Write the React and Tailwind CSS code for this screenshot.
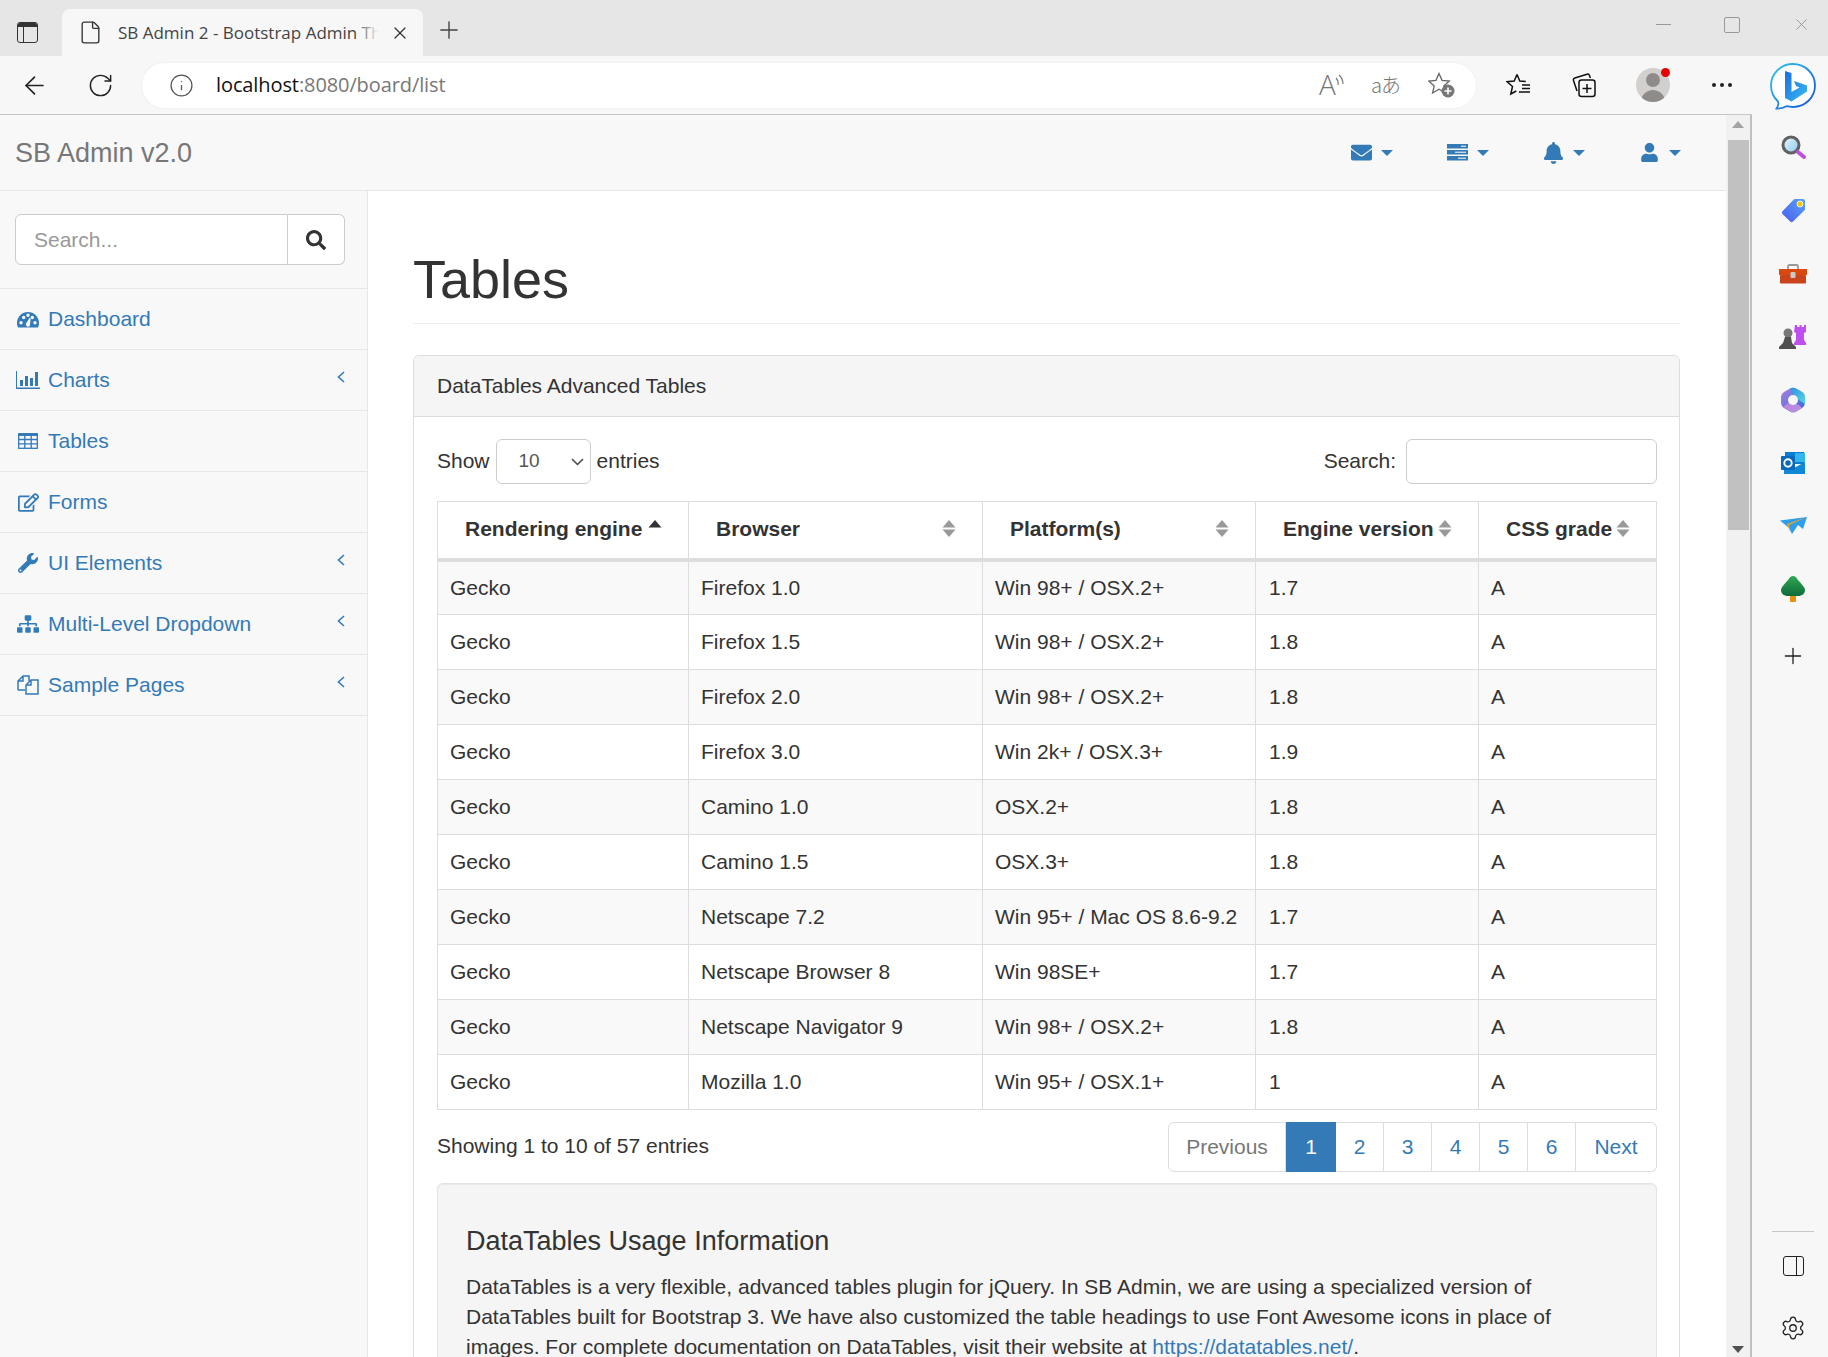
import { ArrowLeft, RotateCw, Info, X, Plus, File, Settings } from 'lucide-react'
import { FaRegEdit, FaWrench, FaSitemap, FaSearch, FaEnvelope, FaBell, FaUser } from 'react-icons/fa'

const rows = [
  ['Firefox 1.0', 'Win 98+ / OSX.2+', '1.7'],
  ['Firefox 1.5', 'Win 98+ / OSX.2+', '1.8'],
  ['Firefox 2.0', 'Win 98+ / OSX.2+', '1.8'],
  ['Firefox 3.0', 'Win 2k+ / OSX.3+', '1.9'],
  ['Camino 1.0', 'OSX.2+', '1.8'],
  ['Camino 1.5', 'OSX.3+', '1.8'],
  ['Netscape 7.2', 'Win 95+ / Mac OS 8.6-9.2', '1.7'],
  ['Netscape Browser 8', 'Win 98SE+', '1.7'],
  ['Netscape Navigator 9', 'Win 98+ / OSX.2+', '1.8'],
  ['Mozilla 1.0', 'Win 95+ / OSX.1+', '1'],
]

function GaugeIcon() {
  return (
    <svg width="22" height="17" viewBox="0 0 22 17" fill="#337ab7">
      <path fillRule="evenodd" d="M11 1C5 1 0 5.800 0 12c0 1.700.4 3.300 1.100 4.500h19.800C21.600 15.300 22 13.700 22 12 22 5.800 17 1 11 1zM4 13.500a1.700 1.700 0 1 1 0-3.400 1.700 1.700 0 0 1 0 3.400zm2.700-5.300a1.700 1.700 0 1 1 0-3.400 1.700 1.700 0 0 1 0 3.400zM11 6a1.700 1.700 0 1 1 0-3.400A1.700 1.700 0 0 1 11 6zm1.900 8.800a2.300 2.300 0 0 1-4-2.100l3.600-5.600 1.200.4-.8 6.500zm2.400-6.600a1.700 1.700 0 1 1 0-3.400 1.700 1.700 0 0 1 0 3.400zm2.700 5.300a1.700 1.700 0 1 1 0-3.400 1.700 1.700 0 0 1 0 3.400z" />
    </svg>
  )
}

function BarsIcon() {
  return (
    <svg width="24" height="18" viewBox="0 0 24 18" fill="#337ab7">
      <rect x="0" y="0" width="1" height="18" />
      <rect x="0" y="16.500" width="24" height="1.500" />
      <rect x="4" y="9" width="3" height="6" />
      <rect x="9" y="5" width="3" height="10" />
      <rect x="14" y="7" width="3" height="8" />
      <rect x="19" y="1" width="3" height="14" />
    </svg>
  )
}

function TableIcon() {
  return (
    <svg width="20" height="16" viewBox="0 0 20 16" fill="none" stroke="#337ab7" strokeWidth="1.300">
      <rect x=".7" y=".7" width="18.600" height="14.600" />
      <path d="M.7 1.800h18.600" strokeWidth="2.400" />
      <path d="M.7 6.500h18.600M.7 10.800h18.600M6.800 1v14M13.200 1v14" />
    </svg>
  )
}

function FilesIcon() {
  return (
    <svg width="22" height="20" viewBox="0 0 22 20" fill="none" stroke="#337ab7" strokeWidth="1.500">
      <path d="M1 15V6l5-5h6v5M6 1v5H1M1 15h7" />
      <path d="M9 19V10l5-5h7v14H9zM14 5v5H9" />
    </svg>
  )
}

function Caret({ color = '#337ab7' }) {
  return (
    <svg width="12" height="6" viewBox="0 0 12 6" fill={color}>
      <path d="M0 0h12L6 6z" />
    </svg>
  )
}

function ServerIcon() {
  return (
    <svg width="21" height="17" viewBox="0 0 21 17" fill="#337ab7">
      <rect y="0" width="21" height="4.500" />
      <rect y="6" width="21" height="4.500" />
      <rect y="12" width="21" height="4.500" />
      <rect x="14" y="1.700" width="5" height="1" fill="#fff" />
      <rect x="8" y="7.700" width="11" height="1" fill="#fff" />
      <rect x="11" y="13.700" width="8" height="1" fill="#fff" />
    </svg>
  )
}

function SortIcon({ only }) {
  return (
    <svg width="14" height="17" viewBox="0 0 14 17" className="shrink-0">
      {only ? (
        <path d="M7 0l6.500 7.500H.500z" fill="#333" />
      ) : (
        <>
          <path d="M7 0l6.500 7.500H.500z" fill="#999" />
          <path d="M7 17l6.500-7.500H.500z" fill="#999" />
        </>
      )}
    </svg>
  )
}

function Chevron() {
  return (
    <svg width="8" height="12" viewBox="0 0 8 12" fill="none" stroke="#337ab7" strokeWidth="1.600">
      <path d="M7 1L1.500 6 7 11" />
    </svg>
  )
}

function NavRow({ icon, label, more }) {
  return (
    <a className="flex h-[61px] items-center border-b border-[#e7e7e7] text-[#337ab7]">
      <span className="flex w-[48px] shrink-0 justify-center pl-[10px] pr-[2px]">{icon}</span>
      <span className="flex-1">{label}</span>
      {more && (
        <span className="mb-[6px] mr-[22px]">
          <Chevron />
        </span>
      )}
    </a>
  )
}

function Th({ label, only }) {
  return (
    <th className="border border-b-[4px] border-[#ddd] p-0">
      <div className="flex items-center justify-between pb-[2px] pl-[27px] pr-[26px]">
        <span className="font-bold">{label}</span>
        <SortIcon only={only} />
      </div>
    </th>
  )
}

function SideSearch() {
  return (
    <svg width="25" height="25" viewBox="0 0 25 25">
      <defs>
        <linearGradient id="lens" x1="0" y1="0" x2="1" y2="1">
          <stop offset="0" stopColor="#e8f6fd" />
          <stop offset="1" stopColor="#8cc8ee" />
        </linearGradient>
      </defs>
      <circle cx="10" cy="10" r="8" fill="url(#lens)" stroke="#616161" strokeWidth="3" />
      <path d="M17 17l6 5" stroke="#c04fe0" strokeWidth="4" strokeLinecap="round" />
    </svg>
  )
}

function SideTag() {
  return (
    <svg width="25" height="25" viewBox="0 0 25 25">
      <defs>
        <linearGradient id="tag" x1="1" y1="0" x2="0" y2="1">
          <stop offset="0" stopColor="#57a4f5" />
          <stop offset="1" stopColor="#4a5cf0" />
        </linearGradient>
      </defs>
      <path d="M14 1h8a2 2 0 0 1 2 2v8a2 2 0 0 1-.700 1.500L12 23.500a2 2 0 0 1-2.800 0L1.500 16a2 2 0 0 1 0-2.800L12.500 1.700A2 2 0 0 1 14 1z" fill="url(#tag)" />
      <circle cx="19" cy="6" r="3" fill="#f7c600" stroke="#fff" strokeWidth=".8" />
    </svg>
  )
}

function SideBox() {
  return (
    <svg width="28" height="20" viewBox="0 0 28 20">
      <path d="M9 5V2.500A1.500 1.500 0 0 1 10.500 1h7A1.500 1.500 0 0 1 19 2.500V5" fill="none" stroke="#9a9a9a" strokeWidth="1.800" />
      <rect x="0" y="5" width="28" height="6" fill="#d9480f" />
      <rect x="1" y="11" width="26" height="8.500" rx="1" fill="#c9441a" />
      <rect x="11.500" y="8" width="5" height="6" rx="1" fill="#c9c9c9" />
    </svg>
  )
}

function SideChess() {
  return (
    <svg width="28" height="26" viewBox="0 0 28 26">
      <path d="M16 1h2v2h2.500V1h2v2H25V1h2v7l-2 1v7l2 3v2H15v-2l2-3V9l-2-1z" fill="#c04ff0" />
      <circle cx="9" cy="9" r="4.500" fill="#787878" />
      <path d="M6 13h6l1 6 4 4v2H0v-2l4-4z" fill="#505050" />
    </svg>
  )
}

function SideM365() {
  return (
    <svg width="24" height="26" viewBox="0 0 24 26">
      <defs>
        <linearGradient id="m1" x1="0" y1="0" x2="1" y2="1">
          <stop offset="0" stopColor="#ae7fe2" />
          <stop offset="1" stopColor="#2b6fd6" />
        </linearGradient>
        <linearGradient id="m2" x1="0" y1="0" x2="1" y2="1">
          <stop offset="0" stopColor="#2b8fe8" />
          <stop offset="1" stopColor="#58dbe0" />
        </linearGradient>
      </defs>
      <path d="M9 1.500a6 6 0 0 1 6 0l6 3.500a6 6 0 0 1 3 5v6a6 6 0 0 1-3 5l-6 3.500a6 6 0 0 1-6 0L3 21a6 6 0 0 1-3-5v-6a6 6 0 0 1 3-5z" fill="url(#m1)" />
      <path d="M9 1.500a6 6 0 0 1 6 0l6 3.500a6 6 0 0 1 3 5v7l-6-4-6-6z" fill="url(#m2)" />
      <path d="M2 20l7-5 9 3 3 3-6 3.500a6 6 0 0 1-6 0z" fill="#b98ae0" />
      <circle cx="12" cy="13" r="5" fill="#f7f7f7" />
    </svg>
  )
}

function SideOutlook() {
  return (
    <svg width="24" height="22" viewBox="0 0 24 22">
      <rect x="4" y="0" width="19" height="12" fill="#0a7cd4" />
      <rect x="14" y="1" width="10" height="9" fill="#32b5ee" />
      <path d="M3 11l10 5 11-6v12H3z" fill="#0f88d8" />
      <rect x="0" y="4" width="14" height="14" rx="1" fill="#0869bd" />
      <circle cx="7" cy="11" r="3.700" fill="none" stroke="#fff" strokeWidth="1.900" />
    </svg>
  )
}

function SidePlane() {
  return (
    <svg width="27" height="17" viewBox="0 0 27 17">
      <path d="M0 3.500L27 0l-4 12-5-4-6 9-3-6z" fill="#2f9eea" />
      <path d="M27 0L9 8l1 7-3-8z" fill="#f6a51f" />
    </svg>
  )
}

function SideTree() {
  return (
    <svg width="24" height="26" viewBox="0 0 24 26">
      <defs>
        <linearGradient id="leaf" x1="0" y1="0" x2="0" y2="1">
          <stop offset="0" stopColor="#2fa84f" />
          <stop offset="1" stopColor="#0e6b3c" />
        </linearGradient>
      </defs>
      <rect x="9" y="19" width="6" height="7" rx="1" fill="#e8920c" />
      <path d="M12 0c2 0 3.500 1.500 4.500 3.500 2 2 4 4.500 6 7 1 1.500 1.500 2.500 1.500 3.500 0 3.700-3 6-7 6H7c-4 0-7-2.300-7-6 0-1 .5-2 1.500-3.500 2-2.500 4-5 6-7C8.500 1.500 10 0 12 0z" fill="url(#leaf)" />
    </svg>
  )
}

function BingIcon() {
  return (
    <svg width="46" height="47" viewBox="0 0 46 47">
      <defs>
        <linearGradient id="ring" x1="0" y1="0" x2="1" y2="1">
          <stop offset="0" stopColor="#30c8f0" />
          <stop offset="1" stopColor="#1450d8" />
        </linearGradient>
        <linearGradient id="bee" x1="0" y1="0" x2="1" y2="1">
          <stop offset="0" stopColor="#1c6be0" />
          <stop offset="1" stopColor="#37bdf0" />
        </linearGradient>
      </defs>
      <path d="M23 1C11 1 1 10.500 1 22.500c0 6.500 2.800 12 7 16 .8 1.800.2 4.500-1.500 7 3.500.2 7.500-.8 10-2.300 2 .5 4.300.8 6.500.8 12 0 22-9.500 22-21.500S35 1 23 1z" fill="#fff" stroke="url(#ring)" strokeWidth="1.800" />
      <path d="M15 8l6.500 2v19l8-4.500-3.500-1.500-2-5 13 4.500v6L21.500 38.500 15 35z" fill="url(#bee)" />
    </svg>
  )
}

export default function App() {
  return (
    <div className="flex h-[1357px] w-[1828px] flex-col overflow-hidden bg-[#f7f7f7] font-['Liberation_Sans',sans-serif] text-[21px] text-[#333]">
      {/* tab strip */}
      <div className="flex h-[56px] shrink-0 items-end bg-[#e6e6e6] pl-[17px]">
        <div className="mb-[13px] flex h-[21px] w-[21px] flex-col overflow-hidden rounded-[3px] border-[1.500px] border-[#333]">
          <div className="h-[4px] bg-[#333]" />
          <div className="ml-[5px] flex-1 border-l-[1.500px] border-[#333]" />
        </div>
        <div className="ml-[24px] flex h-[47px] w-[361px] items-center rounded-t-[8px] bg-[#f7f7f7] pl-[16px] font-['Open_Sans',sans-serif]">
          <File size={25} strokeWidth={1.300} className="text-[#333]" />
          <div className="relative ml-[15px] w-[261px] overflow-hidden whitespace-nowrap text-[17px] text-[#444]">
            SB Admin 2 - Bootstrap Admin Theme
            <div className="absolute inset-y-0 right-0 w-[24px] bg-gradient-to-r from-transparent to-[#f7f7f7]" />
          </div>
          <X size={20} strokeWidth={1.500} className="ml-[11px] text-[#333]" />
        </div>
        <Plus size={28} strokeWidth={1.200} className="mb-[12px] ml-[12px] text-[#444]" />
        <div className="flex-1" />
        <div className="mb-[31px] h-[1px] w-[15px] bg-[#999]" />
        <div className="mb-[23px] ml-[53px] h-[16px] w-[16px] rounded-[2px] border border-[#999]" />
        <X size={19} strokeWidth={1} className="mb-[22px] ml-[52px] mr-[17px] text-[#888]" />
      </div>

      <div className="flex min-h-0 flex-1">
        <div className="flex w-[1752px] shrink-0 flex-col">
          {/* browser toolbar */}
          <div className="flex h-[59px] shrink-0 items-center border-b border-[#c6c6c6]">
            <ArrowLeft size={29} strokeWidth={1.400} className="ml-[20px] text-[#222]" />
            <RotateCw size={27} strokeWidth={1.300} className="ml-[38px] text-[#222]" />
            <div className="ml-[28px] flex h-[45px] w-[1334px] items-center rounded-full bg-white pl-[27px] pr-[21px] font-['Open_Sans',sans-serif] shadow-[0_0_3px_rgba(0,0,0,0.06)]">
              <Info size={25} strokeWidth={1.200} className="text-[#555]" />
              <div className="ml-[22px] flex-1 text-[20px] tracking-[-0.1px] text-[#777]">
                <span className="text-[#111]">localhost</span>:8080/board/list
              </div>
              <svg width="26" height="26" viewBox="0 0 26 26" fill="none" stroke="#777" strokeWidth="1.200" className="ml-[3px] overflow-visible">
                <text x="-1" y="23" fontSize="28" fontFamily="Open Sans" fontWeight="300" fill="#777" stroke="none">A</text>
                <path d="M16 6a8 8 0 0 1 2 7M19 3a12 12 0 0 1 4 9" />
              </svg>
              <span className="ml-[25px] font-['Noto_Sans_CJK_JP',sans-serif] text-[20px] font-light leading-none tracking-[-1px] text-[#777]">aあ</span>
              <svg width="27" height="26" viewBox="0 0 27 26" fill="none" className="ml-[28px]">
                <path d="M11 1.500l3 6.800 7.300.7-5.500 4.900 1.600 7.100-6.400-3.700-6.400 3.700 1.600-7.100L.700 9l7.300-.7z" stroke="#666" strokeWidth="1.300" />
                <circle cx="20" cy="19" r="6.500" fill="#777" />
                <path d="M20 15.500v7M16.500 19h7" stroke="#fff" strokeWidth="1.600" />
              </svg>
            </div>
            <svg width="24" height="24" viewBox="0 0 24 24" fill="none" stroke="#111" strokeWidth="1.500" className="ml-[30px]">
              <path d="M11 1.500l2.800 6.500 6 .5M11 1.500L8.200 8 1 8.700l5.500 4.800L4.800 21l5.500-3M16 12h8M16 15.500h8M13 19h11" />
            </svg>
            <svg width="24" height="25" viewBox="0 0 24 25" fill="none" stroke="#111" strokeWidth="1.500" className="ml-[42px]">
              <path d="M5 18L1.500 7.500a2 2 0 0 1 1.300-2.500L15 1.200a2 2 0 0 1 2.500 1.200l.8 2.600" />
              <rect x="7" y="7" width="16" height="16.500" rx="2.500" />
              <path d="M15 11v9M10.500 15.500h9" />
            </svg>
            <div className="relative ml-[40px] flex h-[34px] w-[34px] items-end justify-center overflow-hidden rounded-full bg-[#d2d0ce]">
              <div className="absolute left-[10px] top-[5px] h-[14px] w-[14px] rounded-full bg-[#8f8b88]" />
              <div className="h-[12px] w-[24px] rounded-t-full bg-[#8f8b88]" />
            </div>
            <div className="relative ml-[-9px] mb-[25px] h-[9px] w-[9px] rounded-full bg-[#e60000]" />
            <div className="ml-[42px] flex w-[20px] justify-between">
              <span className="h-[4px] w-[4px] rounded-full bg-[#222]" />
              <span className="h-[4px] w-[4px] rounded-full bg-[#222]" />
              <span className="h-[4px] w-[4px] rounded-full bg-[#222]" />
            </div>
          </div>

          <div className="flex min-h-0 flex-1 border-r-[2px] border-[#c0c0c0]">
            <div className="flex w-[1726px] shrink-0 flex-col bg-white">
              {/* app navbar */}
              <div className="flex h-[76px] shrink-0 items-center border-b border-[#e7e7e7] bg-[#f8f8f8] pl-[15px] pr-[45px]">
                <span className="flex-1 pt-[1px] text-[27px] text-[#777]">SB Admin v2.0</span>
                <div className="flex items-center gap-[54px]">
                  <div className="flex items-center gap-[9px]">
                    <span className="flex w-[21px] justify-center"><FaEnvelope size={21} color="#337ab7" /></span>
                    <Caret />
                  </div>
                  <div className="flex items-center gap-[9px]">
                    <span className="flex w-[21px] justify-center"><ServerIcon /></span>
                    <Caret />
                  </div>
                  <div className="flex items-center gap-[9px]">
                    <span className="flex w-[21px] justify-center"><FaBell size={22} color="#337ab7" /></span>
                    <Caret />
                  </div>
                  <div className="flex items-center gap-[9px]">
                    <span className="flex w-[21px] justify-center"><FaUser size={19} color="#337ab7" /></span>
                    <Caret />
                  </div>
                </div>
              </div>

              <div className="flex min-h-0 flex-1">
                {/* side menu */}
                <div className="w-[368px] shrink-0 border-r border-[#e7e7e7] bg-[#f8f8f8]">
                  <div className="flex h-[98px] items-start border-b border-[#e7e7e7] pl-[15px] pt-[23px]">
                    <div className="flex h-[51px] w-[273px] items-center rounded-l-[6px] border border-[#ccc] bg-white pl-[18px] text-[#999]">Search...</div>
                    <div className="flex h-[51px] w-[57px] items-center justify-center rounded-r-[6px] border border-l-0 border-[#ccc] bg-white">
                      <FaSearch size={20} color="#333" />
                    </div>
                  </div>
                  <NavRow icon={<GaugeIcon />} label="Dashboard" />
                  <NavRow icon={<BarsIcon />} label="Charts" more />
                  <NavRow icon={<TableIcon />} label="Tables" />
                  <NavRow icon={<FaRegEdit size={21} color="#337ab7" />} label="Forms" />
                  <NavRow icon={<FaWrench size={20} color="#337ab7" />} label="UI Elements" more />
                  <NavRow icon={<FaSitemap size={22} color="#337ab7" />} label="Multi-Level Dropdown" more />
                  <NavRow icon={<FilesIcon />} label="Sample Pages" more />
                </div>

                {/* page content */}
                <div className="min-w-0 flex-1 pl-[45px] pr-[46px]">
                  <div className="mb-[31px] border-b border-[#eee] pb-[14px] pt-[59px]">
                    <h1 className="text-[54px] leading-[59px]">Tables</h1>
                  </div>
                  <div className="rounded-t-[6px] border border-[#ddd]">
                    <div className="flex h-[61px] items-center rounded-t-[6px] border-b border-[#ddd] bg-[#f5f5f5] pl-[23px]">DataTables Advanced Tables</div>
                    <div className="pl-[23px] pr-[22px] pt-[22px]">
                      <div className="mb-[17px] flex h-[45px] items-center justify-between">
                        <div className="flex items-center">
                          <span className="mb-[2px]">Show</span>
                          <div className="relative mx-[6px]">
                            <select className="block h-[45px] w-[95px] appearance-none rounded-[6px] border border-[#ccc] bg-white pl-[22px] text-[19px] text-[#555]">
                              <option>10</option>
                            </select>
                            <svg width="13" height="8" viewBox="0 0 13 8" fill="none" stroke="#444" strokeWidth="1.500" className="absolute right-[7px] top-[19px]">
                              <path d="M1 1l5.500 5.500L12 1" />
                            </svg>
                          </div>
                          <span className="mb-[2px]">entries</span>
                        </div>
                        <div className="flex items-center">
                          <span className="mb-[2px]">Search:</span>
                          <div className="ml-[10px] h-[45px] w-[251px] rounded-[6px] border border-[#ccc] bg-white" />
                        </div>
                      </div>
                      <table className="w-[1219px] table-fixed border-collapse">
                        <colgroup>
                          <col className="w-[251px]" />
                          <col className="w-[294px]" />
                          <col className="w-[273px]" />
                          <col className="w-[223px]" />
                          <col className="w-[178px]" />
                        </colgroup>
                        <thead>
                          <tr className="h-[58px] text-left">
                            <Th label="Rendering engine" only />
                            <Th label="Browser" />
                            <Th label="Platform(s)" />
                            <Th label="Engine version" />
                            <Th label="CSS grade" />
                          </tr>
                        </thead>
                        <tbody>
                          {rows.map((r, i) => (
                            <tr key={i} className={`h-[55px] ${i % 2 === 0 ? 'bg-[#f9f9f9]' : 'bg-white'}`}>
                              <td className="border border-[#ddd] pl-[12px]">Gecko</td>
                              <td className="border border-[#ddd] pl-[12px]">{r[0]}</td>
                              <td className="border border-[#ddd] pl-[12px]">{r[1]}</td>
                              <td className="border border-[#ddd] pl-[13px]">{r[2]}</td>
                              <td className="border border-[#ddd] pl-[12px]">A</td>
                            </tr>
                          ))}
                        </tbody>
                      </table>
                      <div className="mt-[12px] flex items-start justify-between">
                        <span className="mt-[8px]">Showing 1 to 10 of 57 entries</span>
                        <div className="flex h-[50px] text-[#337ab7]">
                          <span className="flex w-[118px] items-center justify-center rounded-l-[6px] border border-[#ddd] text-[#777]">Previous</span>
                          <span className="flex w-[50px] items-center justify-center bg-[#337ab7] text-white">1</span>
                          {['2', '3', '4', '5', '6'].map((n) => (
                            <span key={n} className="flex w-[48px] items-center justify-center border border-l-0 border-[#ddd]">{n}</span>
                          ))}
                          <span className="flex w-[81px] items-center justify-center rounded-r-[6px] border border-l-0 border-[#ddd]">Next</span>
                        </div>
                      </div>
                      <div className="mt-[11px] rounded-[6px] border border-[#e3e3e3] bg-[#f5f5f5] px-[28px] pb-[28px] pt-[42px] shadow-[inset_0_1px_1px_rgba(0,0,0,0.05)]">
                        <h4 className="mb-[16px] text-[27px] leading-[30px]">DataTables Usage Information</h4>
                        <p className="leading-[30px]">
                          DataTables is a very flexible, advanced tables plugin for jQuery. In SB Admin, we are using a specialized version of DataTables built for Bootstrap 3. We have also customized the table headings to use Font Awesome icons in place of images. For complete documentation on DataTables, visit their website at <a className="text-[#337ab7]">https://datatables.net/</a>.
                        </p>
                      </div>
                    </div>
                  </div>
                </div>
              </div>
            </div>

            {/* page scrollbar */}
            <div className="flex flex-1 flex-col items-center bg-[#f1f1f1] pb-[4px] pt-[6px]">
              <svg width="12" height="7" viewBox="0 0 12 7" fill="#a3a3a3"><path d="M6 0l6 7H0z" /></svg>
              <div className="mt-[12px] h-[390px] w-[21px] bg-[#c1c1c1]" />
              <div className="flex-1" />
              <svg width="12" height="7" viewBox="0 0 12 7" fill="#505050"><path d="M6 7l6-7H0z" /></svg>
            </div>
          </div>
        </div>

        {/* edge sidebar */}
        <div className="flex flex-1 flex-col items-center bg-[#f7f7f7] pl-[6px]">
          <div className="mt-[7px] flex h-[47px] items-center"><BingIcon /></div>
          <div className="mt-[6px] flex flex-col items-center">
            <div className="flex h-[63px] items-center"><SideSearch /></div>
            <div className="flex h-[63px] items-center"><SideTag /></div>
            <div className="flex h-[63px] items-center"><SideBox /></div>
            <div className="flex h-[63px] items-center"><SideChess /></div>
            <div className="flex h-[63px] items-center"><SideM365 /></div>
            <div className="flex h-[63px] items-center"><SideOutlook /></div>
            <div className="flex h-[63px] items-center"><SidePlane /></div>
            <div className="flex h-[63px] items-center"><SideTree /></div>
            <div className="mt-[4px] flex h-[63px] items-center"><Plus size={26} strokeWidth={1.200} className="text-[#222]" /></div>
          </div>
          <div className="flex-1" />
          <div className="mb-[24px] h-[1px] w-[42px] bg-[#c8c8c8]" />
          <div className="mb-[39px] flex h-[20px] w-[21px] justify-end overflow-hidden rounded-[3px] border-[1.500px] border-[#222]">
            <div className="w-[7px] border-l-[1.500px] border-[#222]" />
          </div>
          <Settings size={26} strokeWidth={1.200} className="mb-[16px] text-[#222]" />
        </div>
      </div>
    </div>
  )
}
